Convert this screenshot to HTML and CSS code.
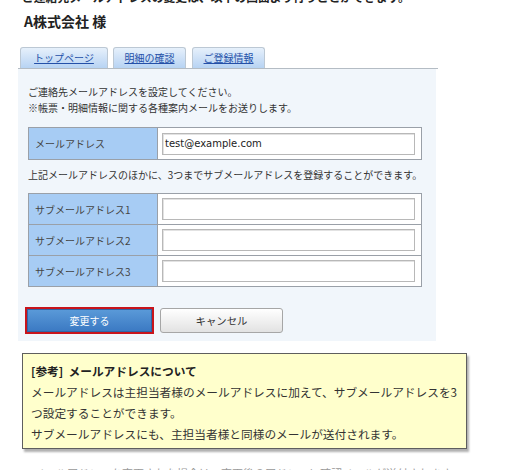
FILE: index.html
```html
<!DOCTYPE html>
<html lang="ja">
<head>
<meta charset="utf-8">
<title>メールアドレス設定</title>
<link rel="stylesheet" href="styles.css">
</head>
<body>
<div class="cut-top"><span>ご連絡先メールアドレスの変更は、以下の画面より行うことができます。</span></div>
<h1 class="company">A株式会社 様</h1>
<div class="tabs">
  <a class="tab t1" href="#">トップページ</a>
  <a class="tab t2" href="#">明細の確認</a>
  <a class="tab t3" href="#">ご登録情報</a>
</div>
<div class="panel">
  <p class="lead">ご連絡先メールアドレスを設定してください。<br>※帳票・明細情報に関する各種案内メールをお送りします。</p>
  <table class="form">
    <tr><th>メールアドレス</th><td><div class="input">test@example.com</div></td></tr>
  </table>
  <p class="mid">上記メールアドレスのほかに、3つまでサブメールアドレスを登録することができます。</p>
  <table class="form sub">
    <tr><th>サブメールアドレス1</th><td><div class="input"></div></td></tr>
    <tr><th>サブメールアドレス2</th><td><div class="input"></div></td></tr>
    <tr><th>サブメールアドレス3</th><td><div class="input"></div></td></tr>
  </table>
  <div class="buttons">
    <button class="btn primary">変更する</button>
    <button class="btn cancel">キャンセル</button>
  </div>
</div>
<div class="note">
  <p class="note-title">[参考]&nbsp;&nbsp;メールアドレスについて</p>
  <p>メールアドレスは主担当者様のメールアドレスに加えて、サブメールアドレスを3つ設定することができます。</p>
  <p>サブメールアドレスにも、主担当者様と同様のメールが送付されます。</p>
</div>
<div class="cut-bottom">メールアドレスを変更された場合は、変更後のアドレスに確認メールが送付されます。</div>
</body>
</html>
```
FILE: styles.css
```css
html, body {
  margin: 0;
  padding: 0;
  background: #ffffff;
}
body {
  width: 508px;
  font-family: "Noto Sans CJK JP", "Noto Sans", sans-serif;
  color: #333;
  overflow: hidden;
}
p { margin: 0; }

.cut-top {
  height: 4px;
  overflow: hidden;
  display: flex;
  align-items: flex-end;
  padding-left: 22px;
}
.cut-top span {
  font-size: 11.8px;
  font-weight: bold;
  line-height: 12px;
  margin-bottom: 1px;
  color: #222;
  white-space: nowrap;
}

.company {
  margin: 7px 0 0 24px;
  font-size: 14px;
  line-height: 20px;
  font-weight: bold;
  color: #222;
}

.tabs {
  margin: 16px 0 0 18px;
  width: 418px;
  height: 21px;
  border-bottom: 1px solid #b4bcc4;
  display: flex;
  align-items: flex-end;
  padding-left: 2px;
  box-sizing: content-box;
}
.tab {
  height: 21px;
  box-sizing: border-box;
  border: 1px solid #bcc8d4;
  border-bottom: none;
  border-radius: 3px 3px 0 0;
  background: linear-gradient(#e6f0fb, #b7d3f3);
  color: #2450a8;
  font-size: 10px;
  line-height: 20px;
  text-align: center;
  text-decoration: underline;
}
.t1 { width: 88px; }
.t2 { width: 73px; margin-left: 5px; }
.t3 { width: 73px; margin-left: 6px; }

.panel {
  margin-left: 18px;
  width: 418px;
  box-sizing: border-box;
  background: #f1f6fb;
  padding: 15px 14px 7px 10px;
}
.lead {
  font-size: 10px;
  line-height: 16px;
  color: #333;
}
.mid {
  font-size: 10px;
  line-height: 16px;
  margin: 7px 0 10px;
  white-space: nowrap;
}

.form {
  width: 394px;
  border-collapse: collapse;
  margin-top: 11px;
}
.form.sub { margin-top: 0; }
.form th, .form td {
  border: 1px solid #9aa0a8;
  height: 31px;
  padding: 0;
}
.form.sub th, .form.sub td { height: 30px; }
.form th {
  width: 122px;
  background: #a7ccf4;
  text-align: left;
  font-weight: normal;
  font-size: 10px;
  color: #444;
  padding-left: 6px;
}
.form td {
  background: #ffffff;
  padding: 0 6px 0 4px;
}
.input {
  height: 22px;
  box-sizing: border-box;
  border: 1px solid #b8b8b8;
  box-shadow: inset 1px 1px 0 #e2e2e2;
  background: #fff;
  font-family: "DejaVu Sans", "Liberation Sans", sans-serif;
  font-size: 10px;
  line-height: 20px;
  padding-left: 2px;
  color: #222;
}

.buttons {
  display: flex;
  align-items: center;
  margin: 20px 0 0 -3px;
}
.btn {
  font-family: "Noto Sans CJK JP", sans-serif;
  font-size: 10px;
  padding: 0;
  cursor: pointer;
}
.primary {
  width: 129px;
  height: 27px;
  border: 2px solid #c8141c;
  background: linear-gradient(#5b9bd9, #3a78c2);
  color: #ffffff;
  box-shadow: inset 0 0 0 1px #2f65a6;
}
.cancel {
  width: 123px;
  height: 25px;
  margin-left: 6px;
  border: 1px solid #a6a6a6;
  border-radius: 3px;
  background: linear-gradient(#ffffff, #e2e2e2);
  color: #333;
  font-size: 10.4px;
}

.note {
  margin: 12px 0 0 22px;
  width: 445px;
  box-sizing: border-box;
  background: #ffffcc;
  border: 1px solid #5e5e5e;
  box-shadow: 2px 3px 2px #b0b0b0;
  padding: 6px 4px 4px 8px;
  font-size: 11.7px;
  line-height: 21px;
  color: #333;
}
.note-title {
  font-weight: bold;
  color: #222;
}

.cut-bottom {
  margin: 17px 0 0 34px;
  font-size: 11px;
  line-height: 14px;
  color: #999;
  white-space: nowrap;
}
```
